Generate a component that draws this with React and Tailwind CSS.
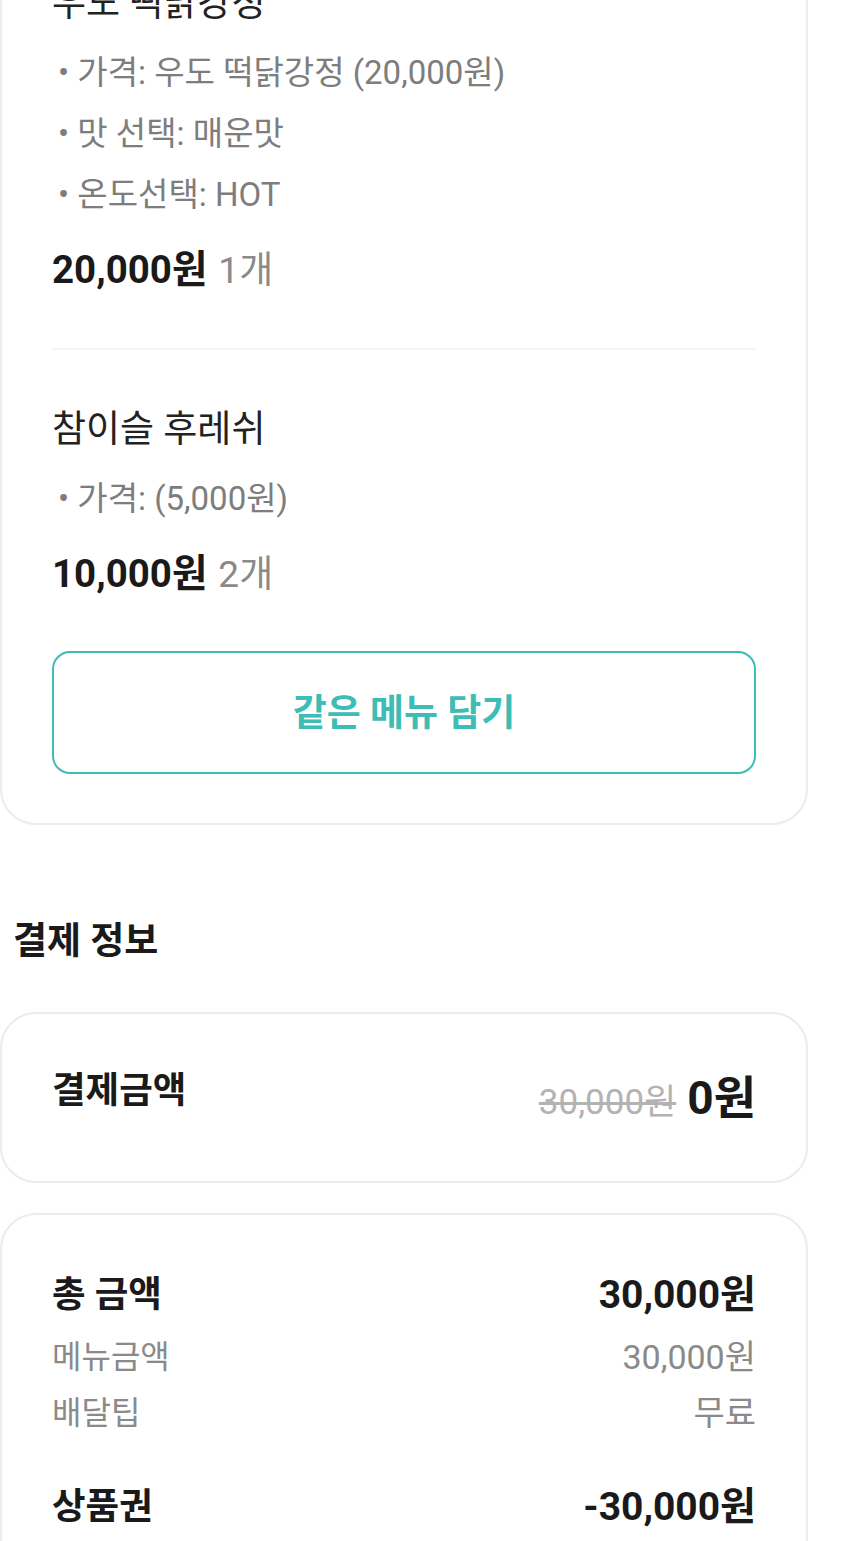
import React from "react";

const items = [
  {
    name: "우도 떡닭강정",
    options: ["가격: 우도 떡닭강정 (20,000원)", "맛 선택: 매운맛", "온도선택: HOT"],
    price: "20,000원",
    qty: "1개",
  },
  {
    name: "참이슬 후레쉬",
    options: ["가격: (5,000원)"],
    price: "10,000원",
    qty: "2개",
  },
];

const MenuItem = ({ item }) => (
  <div>
    <div className="pt-[4px] text-[37px] leading-[60px] text-[#222]">{item.name}</div>
    <ul className="mt-[8px]">
      {item.options.map((opt) => (
        <li key={opt} className="pl-[6px] text-[33px] leading-[61px] text-[#7d7d7d]">
          • {opt}
        </li>
      ))}
    </ul>
    <div className="mt-[15px] flex h-[60px] items-center overflow-hidden">
      <div className="flex items-baseline gap-[11px] leading-none">
        <span className="text-[38.5px] font-bold text-[#1a1a1a]">{item.price}</span>
        <span className="text-[37px] text-[#8a8a8a]">{item.qty}</span>
      </div>
    </div>
  </div>
);

const Row = ({ label, value, strong, className = "" }) => (
  <div
    className={`flex h-[56px] items-center justify-between leading-none ${
      strong ? "font-bold text-[#1a1a1a]" : "text-[#8a8a8a]"
    } ${className}`}
  >
    <span className={strong ? "text-[36.5px]" : "text-[32px]"}>{label}</span>
    <span className={strong ? "text-[39px]" : "text-[34px]"}>{value}</span>
  </div>
);

export default function App() {
  return (
    <div className="h-[1541px] w-[850px] overflow-hidden bg-white font-[Roboto,'Noto_Sans_CJK_KR',sans-serif]">
      {/* Cart card */}
      <div className="-mt-[80px] w-[808px] rounded-[36px] border-2 border-[#ececec] px-[50px] pt-[48px] pb-[49px]">
        <MenuItem item={items[0]} />
        <div className="mt-[48px] h-[2px] bg-[#f3f3f3]" />
        <div className="mt-[46px]">
          <MenuItem item={items[1]} />
        </div>
        <button className="mt-[47px] flex h-[123px] w-full items-center justify-center rounded-[18px] border-2 border-[#3dbdb5] pt-[2px] text-[37px] font-bold text-[#3dbdb5]">
          같은 메뉴 담기
        </button>
      </div>

      {/* Payment info */}
      <div className="mt-[93px] pl-[13px] text-[37px] font-bold leading-[48px] text-[#1a1a1a]">
        결제 정보
      </div>

      <div className="mt-[46px] flex h-[171px] w-[808px] items-center justify-between rounded-[36px] border-2 border-[#ececec] px-[50px]">
        <span className="mb-[12px] text-[36.5px] font-bold leading-none text-[#1a1a1a]">결제금액</span>
        <div className="flex items-baseline gap-[11px] leading-none">
          <span className="text-[35px] text-[#b3b3b3] line-through">30,000원</span>
          <span className="text-[46px] font-bold text-[#1a1a1a]">0원</span>
        </div>
      </div>

      <div className="mt-[30px] w-[808px] rounded-[36px] border-2 border-[#ececec] px-[50px] pt-[52px] pb-[60px]">
        <Row label="총 금액" value="30,000원" strong />
        <Row label="메뉴금액" value="30,000원" className="mt-[6px]" />
        <Row label="배달팁" value="무료" />
        <Row label="상품권" value="-30,000원" strong className="mt-[38px]" />
      </div>
    </div>
  );
}
